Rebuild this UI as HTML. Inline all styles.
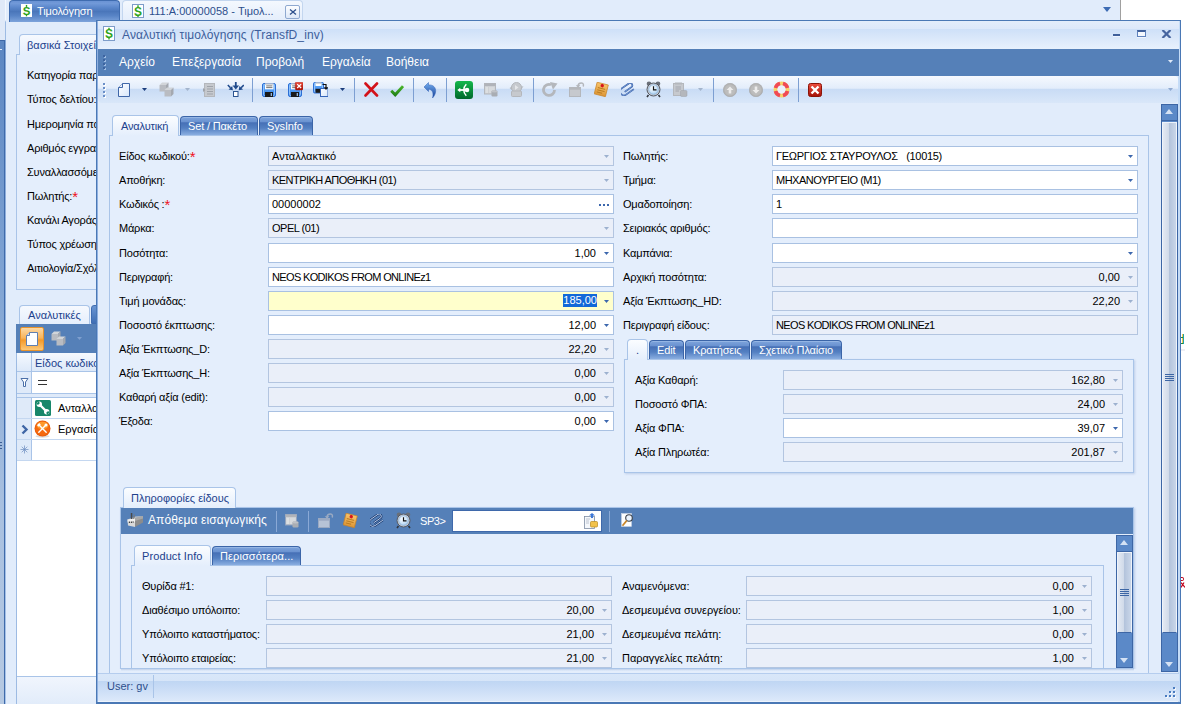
<!DOCTYPE html>
<html><head><meta charset="utf-8">
<style>
*{box-sizing:border-box;margin:0;padding:0}
html,body{width:1185px;height:704px;overflow:hidden;background:#dfeaf9;font-family:"Liberation Sans",sans-serif;font-size:11px;color:#000}
.a{position:absolute}
.t{position:absolute;white-space:nowrap;line-height:14px;height:14px}
.lb{position:absolute;white-space:nowrap;line-height:14px;height:14px;font-size:11px;color:#000;letter-spacing:-0.2px}
.in{position:absolute;height:20px;border:1px solid #a9c1e2;background:#fff;font-size:11px;line-height:18px;padding:0 3px;white-space:nowrap;overflow:hidden}
.in.d{background:#eaeff9;border-color:#b3c5e0}
.in.r{text-align:right;padding-right:17px}
.ar{position:absolute;width:5px;height:3px;background:#3c67ad;clip-path:polygon(0 0,100% 0,50% 100%)}
.ar.g{background:#9db1cf}
.red{color:#f01020;font-size:15px;line-height:10px;vertical-align:-2px;letter-spacing:0}
.u{letter-spacing:-0.55px}
</style></head><body>
<!-- BACKGROUND APP -->
<div id="bg" class="a" style="left:0;top:0;width:1185px;height:704px;overflow:hidden">

<!-- top tab strip -->
<div class="a" style="left:0;top:0;width:1121px;height:22px;background:#e1ecfb"></div>
<div class="a" style="left:1121px;top:0;width:64px;height:704px;background:#fff"></div>
<div class="a" style="left:1120px;top:0;width:1px;height:22px;background:#a0a0a0"></div>
<!-- left strip -->
<div class="a" style="left:0;top:0;width:5px;height:40px;background:#dfe9f8"></div>
<div class="a" style="left:0;top:40px;width:4px;height:664px;border-top:1px solid #3d66a5;background:linear-gradient(#5b86c2 0%,#7fa3d3 35%,#a8c0e0 70%,#b6c9e2 100%)"></div>
<div class="a" style="left:4px;top:40px;width:1px;height:664px;background:#3f6aaa"></div>
<div class="a" style="left:5px;top:0;width:1px;height:704px;background:linear-gradient(#f2f7fe 0,#f2f7fe 20px,#9dbbe3 22px,#9dbbe3 40px,#86a8d8 40px,#a9c4e8 100%)"></div><div class="a" style="left:0;top:49px;width:2px;height:1px;background:#dfe9f8"></div>
<!-- document area -->
<div class="a" style="left:6px;top:22px;width:1115px;height:682px;background:#e1ecfb"></div>
<!-- main tabs -->
<div class="a" style="left:9px;top:0;width:111px;height:22px;border-radius:4px 4px 0 0;background:linear-gradient(#6a93d4 0%,#7199d8 12%,#5c88cc 30%,#4a76ba 50%,#5884c6 70%,#7da3db 100%);border:1px solid #3f6cb0;border-bottom:none"></div>
<svg class="a" style="left:21px;top:4px" width="11" height="13" viewBox="0 0 11 13"><rect x="0" y="0" width="11" height="13" fill="#fff"/><text x="5.5" y="10.8" text-anchor="middle" font-family="Liberation Sans" font-weight="bold" font-size="11.5" fill="#2ea31c">S</text><rect x="4.8" y="0.92" width="1.400" height="2" fill="#2ea31c"/><rect x="4.8" y="10.50" width="1.400" height="1.800" fill="#2ea31c"/></svg>
<div class="t" style="left:37px;top:4px;font-size:11px;letter-spacing:-0.15px;color:#fff">Τιμολόγηση</div>
<div class="a" style="left:122px;top:0;width:181px;height:22px;border-radius:4px 4px 0 0;background:linear-gradient(#f4f8fe,#e3edfb);border:1px solid #c3d6ef;border-bottom:none"></div>
<svg class="a" style="left:132px;top:4px" width="12" height="14" viewBox="0 0 12 14"><rect x="0.5" y="0.5" width="11" height="13" fill="#fff" stroke="#7d9cc9"/><text x="6.0" y="11.5" text-anchor="middle" font-family="Liberation Sans" font-weight="bold" font-size="12.0" fill="#2ea31c">S</text><rect x="5.3" y="1.26" width="1.400" height="2" fill="#2ea31c"/><rect x="5.3" y="11.20" width="1.400" height="1.800" fill="#2ea31c"/></svg>
<div class="t" style="left:149px;top:4px;font-size:11px;color:#2d4f8c">111:A:00000058 - Τιμολ...</div>
<div class="a" style="left:285px;top:5px;width:15px;height:14px;border:1px solid #8fa9d0;border-radius:2px;background:linear-gradient(#fdfeff,#dde8f8)"></div>
<svg class="a" style="left:289px;top:8px" width="8" height="8" viewBox="0 0 8 8"><path d="M1 1.500L7 6.500M7 1.500L1 6.500" stroke="#2d4f8c" stroke-width="1.300"/></svg>
<div class="ar" style="left:1103px;top:7px;background:#3d6cb4;width:8px;height:5px"></div>
<!-- panel 1 -->
<div class="a" style="left:16px;top:54px;width:200px;height:236px;border:1px solid #a9c4e8;background:#e4eefc"></div>
<div class="a" style="left:19px;top:34px;width:100px;height:21px;border:1px solid #a9c4e8;border-bottom:none;border-radius:4px 4px 0 0;background:linear-gradient(#f6f9fe,#e4eefc)"></div>
<div class="t" style="left:27px;top:38px;font-size:11px;color:#21418c">βασικά Στοιχεία</div>
<div class="lb" style="left:27px;top:68px">Κατηγορία παραστατικού:</div>
<div class="lb" style="left:27px;top:92px">Τύπος δελτίου:</div>
<div class="lb" style="left:27px;top:117px">Ημερομηνία παραστατικού:</div>
<div class="lb" style="left:27px;top:141px">Αριθμός εγγραφής:</div>
<div class="lb" style="left:27px;top:165px">Συναλλασσόμενος:</div>
<div class="lb" style="left:27px;top:189px">Πωλητής:<span class="red">*</span></div>
<div class="lb" style="left:27px;top:213px">Κανάλι Αγοράς:</div>
<div class="lb" style="left:27px;top:237px">Τύπος χρέωσης:</div>
<div class="lb" style="left:27px;top:261px">Αιτιολογία/Σχόλια:</div>
<!-- panel 2 : grid -->
<div class="a" style="left:16px;top:324px;width:200px;height:380px;border-left:1px solid #9dbbe3;background:#fff"></div>
<div class="a" style="left:19px;top:305px;width:71px;height:20px;border:1px solid #a9c4e8;border-bottom:none;border-radius:4px 4px 0 0;background:linear-gradient(#f6f9fe,#e4eefc)"></div>
<div class="t" style="left:28px;top:308px;font-size:11px;color:#21418c">Αναλυτικές</div>
<div class="a" style="left:91px;top:305px;width:30px;height:19px;border-radius:3px 3px 0 0;background:linear-gradient(#6a95d2,#3f6fb5);border:1px solid #3f6cb0"></div>
<div class="a" style="left:16px;top:324px;width:200px;height:29px;background:#5580b8"></div>
<div class="a" style="left:20px;top:327px;width:24px;height:24px;border:1px solid #e8932c;border-radius:2px;background:linear-gradient(#fbd9a6 0%,#f9b45a 45%,#f49a2a 55%,#fbc878 100%)"></div>
<svg class="a" style="left:25px;top:331px" width="14" height="16" viewBox="0 0 14 16"><path d="M4.5 1.5H12.5V14.5H1.5V4.5Z" fill="#fdfeff" stroke="#5f7fb0"/><path d="M4.5 1.5V4.5H1.5" fill="#dbe6f5" stroke="#5f7fb0"/></svg>
<svg class="a" style="left:51px;top:331px" width="15" height="15" viewBox="0 0 15 15"><path d="M0.5 3.0H7.0V9.5H0.5Z" fill="#b9bcc2"/><path d="M0.5 3.0L3.0 0.5H9.5L7.0 3.0Z" fill="#d2d5d9"/><path d="M7.0 3.0L9.5 0.5V7.0L7.0 9.5Z" fill="#a4a8af"/><path d="M5.5 8.0H12.0V14.5H5.5Z" fill="#b9bcc2"/><path d="M5.5 8.0L8.0 5.5H14.5L12.0 8.0Z" fill="#d2d5d9"/><path d="M12.0 8.0L14.5 5.5V12.0L12.0 14.5Z" fill="#a4a8af"/></svg>
<div class="ar" style="left:77px;top:337px;background:#7f9fcf"></div>
<!-- header -->
<div class="a" style="left:17px;top:353px;width:200px;height:19px;background:linear-gradient(#f5f9fe,#dde9f9);border-bottom:1px solid #a9c4e8"></div>
<div class="a" style="left:31px;top:353px;width:1px;height:107px;background:#a9c4e8"></div>
<div class="t" style="left:35px;top:356px;font-size:11px;color:#21418c">Είδος κωδικού</div>
<!-- filter row -->
<div class="a" style="left:17px;top:372px;width:14px;height:21px;background:#dfeaf9"></div>
<div class="a" style="left:17px;top:393px;width:200px;height:1px;background:#a9c4e8"></div>
<div class="a" style="left:17px;top:394px;width:200px;height:3px;background:#dfeaf9"></div>
<div class="a" style="left:17px;top:397px;width:200px;height:1px;background:#a9c4e8"></div>
<svg class="a" style="left:20px;top:377px" width="9" height="11" viewBox="0 0 9 11"><path d="M1 1.5H8L5.5 5V9.5H3.5V5Z" fill="#fff" stroke="#4a6fa8" stroke-width="1"/></svg>
<div class="a" style="left:38px;top:380px;width:9px;height:1px;background:#333"></div><div class="a" style="left:38px;top:384px;width:9px;height:1px;background:#333"></div>
<!-- rows -->
<div class="a" style="left:17px;top:398px;width:14px;height:62px;background:#dfeaf9"></div>
<div class="a" style="left:17px;top:418px;width:200px;height:1px;background:#c4d7f0"></div>
<div class="a" style="left:17px;top:439px;width:200px;height:1px;background:#c4d7f0"></div>
<div class="a" style="left:17px;top:460px;width:200px;height:1px;background:#c4d7f0"></div>
<svg class="a" style="left:35px;top:400px" width="16" height="16" viewBox="0 0 16 16"><rect width="16" height="16" rx="1.5" fill="#17876a"/><path d="M4.500 4.500L11.500 11.500" stroke="#fff" stroke-width="2.400"/><circle cx="4.300" cy="4.300" r="2.700" fill="#fff"/><circle cx="11.700" cy="11.700" r="2.700" fill="#fff"/><path d="M1 4.300L3.800 1L4.800 3.200L3.200 4.800Z" fill="#17876a"/><path d="M15 11.700L12.200 15L11.200 12.800L12.800 11.200Z" fill="#17876a"/></svg>
<div class="t" style="left:58px;top:401px;font-size:11px">Ανταλλακτικό</div>
<svg class="a" style="left:34px;top:420px" width="17" height="18" viewBox="0 0 17 18"><ellipse cx="8.500" cy="16.300" rx="7" ry="1.500" fill="#dcdcdc"/><circle cx="8.500" cy="8.500" r="8" fill="#e85a0a"/><circle cx="8.500" cy="8.500" r="7.200" fill="#f56a10"/><ellipse cx="8.500" cy="5.500" rx="5.800" ry="3.800" fill="#ffa030" opacity=".85"/><path d="M4.800 4.800L12.200 12.200M12.200 4.800L4.800 12.200" stroke="#fff" stroke-width="1.400" stroke-linecap="round"/><path d="M3.800 6L6 3.800" stroke="#fff" stroke-width="2.200"/><circle cx="12" cy="5" r="1.500" fill="#fff"/></svg>
<div class="t" style="left:58px;top:422px;font-size:11px">Εργασία</div>
<svg class="a" style="left:21px;top:424px" width="8" height="11" viewBox="0 0 8 11"><path d="M1.500 1.500L5.500 5.500L1.500 9.500" stroke="#3f66a6" stroke-width="2.400" fill="none"/></svg>
<svg class="a" style="left:20px;top:445px" width="9" height="9" viewBox="0 0 9 9"><path d="M4.5 0.5V8.5M0.5 4.5H8.5M1.7 1.7L7.3 7.3M7.3 1.7L1.7 7.3" stroke="#6d8dc0" stroke-width="0.700"/></svg>
<!-- footer of grid -->
<div class="a" style="left:17px;top:676px;width:200px;height:28px;background:linear-gradient(#f0f5fd,#e2ecfa);border-top:1px solid #a9c4e8"></div>
<!-- splitter grip -->
<div class="a" style="left:0;top:442px;width:2px;height:1px;background:#3d5f96"></div>
<div class="a" style="left:0;top:445px;width:2px;height:1px;background:#3d5f96"></div>
<div class="a" style="left:0;top:448px;width:2px;height:1px;background:#3d5f96"></div>
<!-- right side bits -->
<div class="a" style="left:1182px;top:334px;width:1px;height:10px;background:#f2c84a"></div><div class="a" style="left:1183px;top:334px;width:1px;height:10px;background:#1fa0a8"></div><div class="a" style="left:1181px;top:337px;width:2px;height:1px;background:#1d8a3a"></div><div class="a" style="left:1181px;top:343px;width:2px;height:1px;background:#1d8a3a"></div><div class="a" style="left:1181px;top:349px;width:4px;height:2px;background:#eeeef4"></div>
<div class="a" style="left:1181px;top:577px;width:3px;height:4px;border:1px solid #c0001a;border-left:none;border-radius:0 2px 2px 0"></div><svg class="a" style="left:1181px;top:582px" width="4" height="6" viewBox="0 0 4 6"><path d="M0 0.500L4 5.500M0 5.500L3 0.500" stroke="#c0001a" stroke-width="1.200"/></svg>
</div>
<!-- WINDOW -->

<!-- window frame -->
<div class="a" style="left:96px;top:20px;width:1085px;height:684px;background:#e1ecfb;border:1px solid #4a78b5;border-bottom-width:2px;box-shadow:inset 1px 0 0 #8fb0e0,inset -1px 0 0 #c5dcf7,inset -2px 0 0 #c5dcf7,inset 0 -1px 0 #eef4fd"></div>
<!-- title bar -->
<div class="a" style="left:98px;top:21px;width:1081px;height:28px;background:linear-gradient(#e3edfb 0px,#dce8fa 8px,#cee0f8 8px,#d6e5f9 14px,#e8f1fd 28px)"></div>
<svg class="a" style="left:103px;top:26px" width="12" height="15" viewBox="0 0 12 15"><rect x="0.5" y="0.5" width="11" height="14" fill="#fff" stroke="#7d9cc9"/><text x="6.0" y="12.0" text-anchor="middle" font-family="Liberation Sans" font-weight="bold" font-size="12.0" fill="#2ea31c">S</text><rect x="5.3" y="1.76" width="1.400" height="2" fill="#2ea31c"/><rect x="5.3" y="11.70" width="1.400" height="1.800" fill="#2ea31c"/></svg>
<div class="t" style="left:122px;top:28px;font-size:12px;letter-spacing:0.12px;color:#3d5f9c">Αναλυτική τιμολόγησης (TransfD_inv)</div>
<div class="a" style="left:1113px;top:34px;width:7px;height:2px;background:#3f5f9a;box-shadow:0 1px 0 #eef4fd"></div>
<div class="a" style="left:1137px;top:30px;width:9px;height:7px;border:1px solid #5f82bd;border-top:2px solid #3f5f9a;background:#f4f8fe;box-shadow:0 1px 0 #eef4fd"></div>
<svg class="a" style="left:1161px;top:30px" width="11" height="8" viewBox="0 0 11 8"><path d="M1.500 0L9.500 8M9.500 0L1.500 8" stroke="#46659f" stroke-width="2.200"/></svg>
<!-- menu bar -->
<div class="a" style="left:98px;top:49px;width:1081px;height:27px;background:#5580b8"></div>
<div class="t" style="left:119px;top:55px;font-size:12px;color:#fff">Αρχείο</div>
<div class="t" style="left:172px;top:55px;font-size:12px;color:#fff">Επεξεργασία</div>
<div class="t" style="left:256px;top:55px;font-size:12px;color:#fff">Προβολή</div>
<div class="t" style="left:322px;top:55px;font-size:12px;color:#fff">Εργαλεία</div>
<div class="t" style="left:386px;top:55px;font-size:12px;color:#fff">Βοήθεια</div>
<div class="ar" style="left:1168px;top:60px;background:#dfe9f8"></div>
<!-- toolbar -->
<div class="a" style="left:98px;top:76px;width:1080px;height:27px;border-radius:0 4px 4px 4px;background:linear-gradient(#f6f9fe 0%,#e3edfb 45%,#c9dcf5 50%,#d9e7f9 100%)"></div>
<div class="ar g" style="left:1168px;top:88px;background:#8fa9d0"></div>
<div id="tb"><svg width="0" height="0" style="position:absolute"><defs>
<linearGradient id="gDoc" x1="0" y1="0" x2="1" y2="1"><stop offset="0" stop-color="#ffffff"/><stop offset="1" stop-color="#d6e6fb"/></linearGradient>
<linearGradient id="gFl" x1="0" y1="0" x2="0" y2="1"><stop offset="0" stop-color="#6ab2fb"/><stop offset="1" stop-color="#3a84ea"/></linearGradient>
<linearGradient id="gGr" x1="0" y1="0" x2="0" y2="1"><stop offset="0" stop-color="#14b84c"/><stop offset="1" stop-color="#00682b"/></linearGradient>
<linearGradient id="gRd" x1="0" y1="0" x2="0" y2="1"><stop offset="0" stop-color="#ee5040"/><stop offset="1" stop-color="#a41208"/></linearGradient>
<linearGradient id="gUn" x1="0" y1="0" x2="0" y2="1"><stop offset="0" stop-color="#74b0f2"/><stop offset="1" stop-color="#173f96"/></linearGradient>
<linearGradient id="gNt" x1="0" y1="0" x2="0" y2="1"><stop offset="0" stop-color="#f8c46c"/><stop offset="1" stop-color="#dd9636"/></linearGradient>
<linearGradient id="gCk" x1="0" y1="0" x2="0" y2="1"><stop offset="0" stop-color="#5cc43a"/><stop offset="1" stop-color="#1d7a12"/></linearGradient>
<radialGradient id="gFace" cx="0.4" cy="0.35" r="0.7"><stop offset="0" stop-color="#ffffff"/><stop offset="1" stop-color="#a9d0f2"/></radialGradient>
</defs></svg>
<div class="a" style="left:103px;top:83px;width:2px;height:2px;background:#6a8fc8;box-shadow:1px 1px 0 #fff"></div>
<div class="a" style="left:103px;top:87px;width:2px;height:2px;background:#6a8fc8;box-shadow:1px 1px 0 #fff"></div>
<div class="a" style="left:103px;top:91px;width:2px;height:2px;background:#6a8fc8;box-shadow:1px 1px 0 #fff"></div>
<div class="a" style="left:103px;top:95px;width:2px;height:2px;background:#6a8fc8;box-shadow:1px 1px 0 #fff"></div>
<svg class="a" style="left:118px;top:83px" width="12" height="14" viewBox="0 0 12 14"><path d="M4.5 0.5H11.5V13.5H0.5V4.5Z" fill="url(#gDoc)" stroke="#3f66a8"/><path d="M4.5 0.5V4.5H0.5" fill="#e8f0fc" stroke="#3f66a8"/></svg>
<div class="ar" style="left:142px;top:88px;background:#1c3d7c"></div>
<svg class="a" style="left:159px;top:82px" width="15" height="15" viewBox="0 0 15 15"><path d="M0.5 3.0H7.0V9.5H0.5Z" fill="#b9bcc2"/><path d="M0.5 3.0L3.0 0.5H9.5L7.0 3.0Z" fill="#d2d5d9"/><path d="M7.0 3.0L9.5 0.5V7.0L7.0 9.5Z" fill="#a4a8af"/><path d="M5.5 8.0H12.0V14.5H5.5Z" fill="#b9bcc2"/><path d="M5.5 8.0L8.0 5.5H14.5L12.0 8.0Z" fill="#d2d5d9"/><path d="M12.0 8.0L14.5 5.5V12.0L12.0 14.5Z" fill="#a4a8af"/></svg>
<div class="ar" style="left:185px;top:88px;background:#a3b4cc"></div>
<svg class="a" style="left:203px;top:83px" width="13" height="14" viewBox="0 0 13 14"><rect x="1.5" y="0.5" width="10" height="13" fill="#c6c9ce" stroke="#b4b7bc"/><path d="M4 3.5H10M4 6H10M4 8.5H10M4 11H10" stroke="#9fa3aa" stroke-width="1"/><path d="M0 5L2.5 7L0 9Z" fill="#9fa3aa"/></svg>
<svg class="a" style="left:227px;top:82px" width="17" height="15" viewBox="0 0 17 15"><rect x="6.500" y="9.500" width="4.500" height="5" fill="#fff" stroke="#2d5591"/><path d="M8.800 0V4" stroke="#1f4a8c" stroke-width="1.800"/><path d="M5.500 3.500H12.100L8.800 7.500Z" fill="#1f4a8c"/><path d="M0.800 3L3.500 5.700" stroke="#1f4a8c" stroke-width="1.600"/><path d="M5.900 8.300L1.600 7.500L5.200 3.900Z" fill="#1f4a8c"/><path d="M16.800 3L14.100 5.700" stroke="#1f4a8c" stroke-width="1.600"/><path d="M11.700 8.300L16 7.500L12.400 3.900Z" fill="#1f4a8c"/></svg>
<div class="a" style="left:252px;top:78px;width:1px;height:24px;background:#7d9fd2"></div>
<svg class="a" style="left:262px;top:83px" width="14" height="14" viewBox="0 0 14 14"><rect x="0.5" y="0.5" width="13" height="13" rx="1.500" fill="url(#gFl)" stroke="#2c6fd6"/><rect x="1.500" y="1.500" width="11" height="11" rx="1" fill="none" stroke="#8fc2fb" stroke-width="1"/><rect x="3" y="0.500" width="8.500" height="5.800" fill="#fdfeff"/><path d="M3 1H11.500" stroke="#a8aeb8" stroke-width="1"/><path d="M4.200 2.900H10.400M4.200 4.600H10.400" stroke="#666" stroke-width=".9"/><rect x="3" y="9" width="8" height="5" fill="#1a1a1a"/><rect x="8.700" y="10" width="1.200" height="3" fill="#9fc8f5"/></svg>
<svg class="a" style="left:288px;top:82px" width="15" height="15" viewBox="0 -1 15 15"><rect x="0.5" y="0.5" width="13" height="13" rx="1.500" fill="url(#gFl)" stroke="#2c6fd6"/><rect x="1.500" y="1.500" width="11" height="11" rx="1" fill="none" stroke="#8fc2fb" stroke-width="1"/><rect x="3" y="0.500" width="8.500" height="5.800" fill="#fdfeff"/><path d="M3 1H11.500" stroke="#a8aeb8" stroke-width="1"/><path d="M4.200 2.900H10.400M4.200 4.600H10.400" stroke="#666" stroke-width=".9"/><rect x="3" y="9" width="8" height="5" fill="#1a1a1a"/><rect x="8.700" y="10" width="1.200" height="3" fill="#9fc8f5"/><rect x="7.300" y="-0.800" width="7.700" height="7.700" rx="1" fill="url(#gRd)" stroke="#b01a0c" stroke-width=".5"/><path d="M9.200 1.100L13.100 5M13.100 1.100L9.200 5" stroke="#fff" stroke-width="1.300"/></svg>
<svg class="a" style="left:313px;top:82px" width="15" height="15" viewBox="0 0 15 15"><rect x="0.5" y="0.5" width="10" height="10.500" rx="1.200" fill="url(#gFl)" stroke="#2c6fd6"/><rect x="1.500" y="1.500" width="8" height="8.500" rx=".8" fill="none" stroke="#8fc2fb" stroke-width="1"/><rect x="2.500" y="0.500" width="6" height="3.500" fill="#fdfeff"/><path d="M2.500 1H8.500" stroke="#a8aeb8"/><rect x="2.500" y="6.800" width="5.500" height="4" fill="#1a1a1a"/><rect x="7.500" y="6.500" width="7.500" height="8" fill="url(#gDoc)" stroke="#3565b8"/><path d="M9.500 2.500H13V6" stroke="#111" stroke-width="1.200" fill="none"/><path d="M10.800 5.200H15.200L13 8Z" fill="#111"/></svg>
<div class="ar" style="left:340px;top:88px;background:#1c3d7c"></div>
<div class="a" style="left:354px;top:78px;width:1px;height:24px;background:#7d9fd2"></div>
<svg class="a" style="left:364px;top:82px" width="15" height="15" viewBox="0 0 15 15"><path d="M1.500 1.500L13 13.500M13 1.500L1.500 13.500" stroke="#d3121a" stroke-width="2.6" stroke-linecap="round"/></svg>
<svg class="a" style="left:390px;top:84px" width="14" height="13" viewBox="0 0 14 13"><path d="M1.300 6.800L5.200 10.800L13 2.200" stroke="url(#gCk)" stroke-width="3" fill="none" stroke-linejoin="miter"/><path d="M1.300 6.800L5.200 10.800L13 2.200" stroke="#2f9a1e" stroke-width="1.500" fill="none" opacity=".5"/></svg>
<div class="a" style="left:413px;top:78px;width:1px;height:24px;background:#7d9fd2"></div>
<svg class="a" style="left:423px;top:82px" width="14" height="16" viewBox="0 0 14 16"><path d="M1 5L5.500 0.500V3C10 2.500 13.500 5.500 12.500 10.500C12 13 10.500 15 9.500 16C10.500 12.500 10.500 8 5.500 7V9.500Z" fill="url(#gUn)" stroke="#2a5db5" stroke-width=".5"/></svg>
<div class="a" style="left:446px;top:78px;width:1px;height:24px;background:#7d9fd2"></div>
<svg class="a" style="left:455px;top:81px" width="18" height="18" viewBox="0 0 18 18"><rect x="0" y="0" width="18" height="18" rx="3" fill="url(#gGr)"/><path d="M2.300 9L5.300 6.800V11.200Z" fill="#fff"/><rect x="4.800" y="8.100" width="8" height="1.800" fill="#fff"/><path d="M11.300 3.200A8 8 0 0 0 11.300 14.800" stroke="#fff" stroke-width="1.500" fill="none"/><circle cx="12" cy="9" r="2.300" fill="#fff"/></svg>
<svg class="a" style="left:484px;top:83px" width="14" height="14" viewBox="0 0 14 14"><rect x="0.5" y="0.5" width="11" height="10.500" fill="#cdd0d4" stroke="#b4b7bc"/><rect x="0.5" y="0.5" width="11" height="2.500" fill="#b0b3b9"/><path d="M1.500 5H4M1.500 7H4M1.500 9H4" stroke="#eceded" stroke-width="1.200"/><path d="M5 5H10.500M5 7H10.500M5 9H7" stroke="#e2e3e6" stroke-width="1.200"/><rect x="7.500" y="7.500" width="6" height="6" rx="1.200" fill="#a9adb3"/><ellipse cx="10.500" cy="8.500" rx="3" ry="1" fill="#bfc2c7"/></svg>
<svg class="a" style="left:509px;top:82px" width="15" height="15" viewBox="0 0 15 15"><circle cx="7.500" cy="5.500" r="5" fill="#c6c9ce" stroke="#b4b7bc"/><path d="M6 3L9.500 5.500L6 8Z" fill="#e4e6e9"/><rect x="2.500" y="9" width="10" height="5.500" rx="1" fill="#c6c9ce" stroke="#b4b7bc"/><path d="M0.500 6L3 4.500V8ZM14.500 4L12 5V8Z" fill="#b4b7bc"/></svg>
<div class="a" style="left:533px;top:78px;width:1px;height:24px;background:#7d9fd2"></div>
<svg class="a" style="left:542px;top:82px" width="16" height="15" viewBox="0 0 16 15"><path d="M12.500 8A5.500 5.500 0 1 1 9 2.800" stroke="#b4b7bc" stroke-width="2.800" fill="none"/><path d="M8 0L15.500 1.500L11 7.500Z" fill="#b4b7bc"/></svg>
<svg class="a" style="left:569px;top:82px" width="16" height="15" viewBox="0 0 16 15"><rect x="0.5" y="5.500" width="11" height="9" fill="#c6c9ce" stroke="#b4b7bc"/><rect x="0.5" y="5.500" width="11" height="2.200" fill="#b4b7bc"/><path d="M9 4.500C9 2 11 1 12.500 1C14.500 1 15 3 14 4.500" stroke="#b4b7bc" stroke-width="1.400" fill="none"/><path d="M6.800 3.200L9.300 6L11.200 3Z" fill="#b4b7bc"/></svg>
<svg class="a" style="left:594px;top:82px" width="15" height="15" viewBox="0 0 15 15"><g transform="rotate(14 7.500 7.500)"><rect x="1.500" y="1.500" width="11.500" height="12" fill="url(#gNt)" stroke="#c98428" stroke-width=".7"/><path d="M3.500 6.500H11M3.500 8.800H11M3.500 11H9" stroke="#b87a20" stroke-width=".9"/><circle cx="7.300" cy="3.600" r="1.700" fill="#d8141c"/></g></svg>
<svg class="a" style="left:621px;top:83px" width="15" height="13" viewBox="0 0 15 13"><g transform="rotate(-35 7 6.500)"><path d="M3 6.500H11.500A2.300 2.300 0 0 0 11.500 2H2.500A3.800 3.800 0 0 0 2.500 9.600H12" fill="none" stroke="#2b55a2" stroke-width="1.600"/><path d="M3 6.500H11.500A2.300 2.300 0 0 0 11.500 2H2.500A3.800 3.800 0 0 0 2.500 9.600H12" fill="none" stroke="#a9c6f0" stroke-width=".5"/></g></svg>
<svg class="a" style="left:646px;top:81px" width="15" height="17" viewBox="0 0 15 17"><circle cx="3" cy="2.800" r="2.300" fill="#6a6f78"/><circle cx="12" cy="2.800" r="2.300" fill="#6a6f78"/><path d="M2.500 14L1 16M12.500 14L14 16" stroke="#33363c" stroke-width="1.600"/><circle cx="7.500" cy="8.500" r="6.500" fill="#c9ced6" stroke="#555a63" stroke-width="1"/><circle cx="7.500" cy="8.500" r="4.800" fill="url(#gFace)" stroke="#7ba4d0" stroke-width=".6"/><path d="M7.500 5.200V8.800H10.500" stroke="#111" stroke-width="1.200" fill="none"/></svg>
<svg class="a" style="left:673px;top:82px" width="15" height="15" viewBox="0 0 15 15"><rect x="0.5" y="1.500" width="10" height="12" fill="#c6c9ce" stroke="#b4b7bc"/><rect x="2" y="0.500" width="7" height="2" fill="#b4b7bc"/><path d="M2.500 5H8M2.500 7H8M2.500 9H6" stroke="#9fa3aa" stroke-width=".9"/><rect x="7.500" y="8.500" width="6.500" height="6" rx="1.200" fill="#b4b7bc" stroke="#9fa3aa" stroke-width=".5"/></svg>
<div class="ar" style="left:698px;top:88px;background:#a3b4cc"></div>
<div class="a" style="left:713px;top:78px;width:1px;height:24px;background:#7d9fd2"></div>
<svg class="a" style="left:723px;top:83px" width="14" height="14" viewBox="0 0 14 14"><circle cx="7" cy="7" r="6.700" fill="#b5b5b5" stroke="#a2a2a2" stroke-width=".6"/><circle cx="7" cy="7" r="5.200" fill="#bdbdbd"/><path d="M7 3.500L10.500 7H8.300V10.500H5.700V7H3.500Z" fill="#ececec"/></svg>
<svg class="a" style="left:749px;top:83px" width="14" height="14" viewBox="0 0 14 14"><circle cx="7" cy="7" r="6.700" fill="#b5b5b5" stroke="#a2a2a2" stroke-width=".6"/><circle cx="7" cy="7" r="5.200" fill="#bdbdbd"/><path d="M7 10.500L10.500 7H8.300V3.500H5.700V7H3.500Z" fill="#ececec"/></svg>
<svg class="a" style="left:773px;top:81px" width="17" height="17" viewBox="0 0 17 17"><circle cx="8.500" cy="8.500" r="8" fill="#f9d468"/><path d="M16.26 10.44A8 8 0 0 1 10.44 16.26L9.47 12.38A4 4 0 0 0 12.38 9.47Z" fill="#f04a56"/><path d="M6.56 16.26A8 8 0 0 1 0.74 10.44L4.62 9.47A4 4 0 0 0 7.53 12.38Z" fill="#f04a56"/><path d="M0.74 6.56A8 8 0 0 1 6.56 0.74L7.53 4.62A4 4 0 0 0 4.62 7.53Z" fill="#f04a56"/><path d="M10.44 0.74A8 8 0 0 1 16.26 6.56L12.38 7.53A4 4 0 0 0 9.47 4.62Z" fill="#f04a56"/><circle cx="8.500" cy="8.500" r="4.200" fill="#e9f1fc"/></svg>
<div class="a" style="left:798px;top:78px;width:1px;height:24px;background:#7d9fd2"></div>
<svg class="a" style="left:808px;top:83px" width="14" height="14" viewBox="0 0 14 14"><rect x="0.5" y="0.5" width="13" height="13" rx="2" fill="url(#gRd)" stroke="#8c1408"/><path d="M3.500 3.500L10.500 10.500M10.500 3.500L3.500 10.500" stroke="#fff" stroke-width="2.400"/></svg></div><!--/tb-->
<!-- outer scrollbar -->
<div id="sb1"><div class="a" style="left:1161px;top:104px;width:17px;height:568px;background:#5b89c8;border:1px solid #3d66a5"></div><div class="a" style="left:1165px;top:109px;width:0;height:0;border-left:4.5px solid transparent;border-right:4.5px solid transparent;border-bottom:5px solid #d5e2f4"></div><div class="a" style="left:1165px;top:662px;width:0;height:0;border-left:4.5px solid transparent;border-right:4.5px solid transparent;border-top:5px solid #d5e2f4"></div><div class="a" style="left:1161px;top:120px;width:17px;height:1px;background:#3d66a5"></div><div class="a" style="left:1162px;top:122px;width:15px;height:511px;border:1px solid #eef3fa;border-bottom:1px solid #3d66a5;background:linear-gradient(90deg,#e3e9f3 0%,#d0dae9 45%,#b4c4dc 50%,#c9d6e9 100%)"></div><div class="a" style="left:1165px;top:374px;width:9px;height:1px;background:#3d66a5"></div><div class="a" style="left:1165px;top:376px;width:9px;height:1px;background:#3d66a5"></div><div class="a" style="left:1165px;top:378px;width:9px;height:1px;background:#3d66a5"></div><div class="a" style="left:1165px;top:380px;width:9px;height:1px;background:#3d66a5"></div></div>
<!-- tabs -->
<!-- main panel -->
<div class="a" style="left:109px;top:135px;width:1040px;height:539px;border:1px solid #a9c4e8;background:#e4eefc"></div>
<div id="tabs1"><div class="a" style="left:112px;top:115px;width:67px;height:21px;border:1px solid #a9c4e8;border-bottom:none;border-radius:4px 4px 0 0;background:linear-gradient(#fbfdff,#e4eefc)"></div><div class="t" style="left:121px;top:119px;color:#21418c;letter-spacing:-0.15px">Αναλυτική</div><div class="a" style="left:180px;top:116px;width:78px;height:19px;border:1px solid #3b65a8;border-bottom:none;border-radius:4px 4px 0 0;background:linear-gradient(#7ea4dc 0%,#6a92d0 27%,#4670b6 32%,#5480c2 62%,#8aaee1 100%);box-shadow:inset 0 1px 0 #94b5e4"></div><div class="t" style="left:188px;top:119px;color:#fff;letter-spacing:-0.15px">Set / Πακέτο</div><div class="a" style="left:259px;top:116px;width:54px;height:19px;border:1px solid #3b65a8;border-bottom:none;border-radius:4px 4px 0 0;background:linear-gradient(#7ea4dc 0%,#6a92d0 27%,#4670b6 32%,#5480c2 62%,#8aaee1 100%);box-shadow:inset 0 1px 0 #94b5e4"></div><div class="t" style="left:267px;top:119px;color:#fff;letter-spacing:-0.15px">SysInfo</div></div>
<div id="form">
<div class="lb" style="left:119px;top:149px">Είδος κωδικού:<span class=red>*</span></div><div class="in d" style="left:268px;top:146px;width:346px">Ανταλλακτικό</div><div class="ar g" style="left:604px;top:155px"></div>
<div class="lb" style="left:119px;top:173px">Αποθήκη:</div><div class="in d" style="left:268px;top:170px;width:346px"><span class="u">ΚΕΝΤΡΙΚΗ ΑΠΟΘΗΚΗ (01)</span></div><div class="ar g" style="left:604px;top:179px"></div>
<div class="lb" style="left:119px;top:197px">Κωδικός :<span class=red>*</span></div><div class="in" style="left:268px;top:194px;width:346px">00000002</div><div class="a" style="left:599px;top:204px;width:2px;height:2px;background:#3c67ad;box-shadow:4px 0 #3c67ad,8px 0 #3c67ad"></div>
<div class="lb" style="left:119px;top:221px">Μάρκα:</div><div class="in d" style="left:268px;top:218px;width:346px"><span class="u" style="letter-spacing:-0.5px">OPEL (01)</span></div><div class="ar g" style="left:604px;top:227px"></div>
<div class="lb" style="left:119px;top:246px">Ποσότητα:</div><div class="in r" style="left:268px;top:243px;width:346px">1,00</div><div class="ar" style="left:604px;top:252px"></div>
<div class="lb" style="left:119px;top:270px">Περιγραφή:</div><div class="in" style="left:268px;top:267px;width:346px"><span class="u" style="letter-spacing:-0.65px">NEOS KODIKOS FROM ONLINEz1</span></div>
<div class="lb" style="left:119px;top:294px">Τιμή μονάδας:</div><div class="in r" style="left:268px;top:291px;width:346px;background:#ffffcc"><span style="background:#1268d8;color:#fff;display:inline-block;height:13px;line-height:13px;margin-top:2px;padding:0;margin-right:-1px;vertical-align:top">185,00</span></div><div class="ar" style="left:604px;top:300px"></div>
<div class="lb" style="left:119px;top:318px">Ποσοστό έκπτωσης:</div><div class="in r" style="left:268px;top:315px;width:346px">12,00</div><div class="ar" style="left:604px;top:324px"></div>
<div class="lb" style="left:119px;top:342px">Αξία Έκπτωσης_D:</div><div class="in d r" style="left:268px;top:339px;width:346px">22,20</div><div class="ar g" style="left:604px;top:348px"></div>
<div class="lb" style="left:119px;top:366px">Αξία Έκπτωσης_H:</div><div class="in d r" style="left:268px;top:363px;width:346px">0,00</div><div class="ar g" style="left:604px;top:372px"></div>
<div class="lb" style="left:119px;top:390px">Καθαρή αξία (edit):</div><div class="in d r" style="left:268px;top:387px;width:346px">0,00</div><div class="ar g" style="left:604px;top:396px"></div>
<div class="lb" style="left:119px;top:414px">Έξοδα:</div><div class="in r" style="left:268px;top:411px;width:346px">0,00</div><div class="ar" style="left:604px;top:420px"></div>
<div class="lb" style="left:623px;top:149px">Πωλητής:</div><div class="in" style="left:772px;top:146px;width:366px"><span class="u" style="letter-spacing:-0.3px">ΓΕΩΡΓΙΟΣ ΣΤΑΥΡΟΥΛΟΣ&nbsp;&nbsp; (10015)</span></div><div class="ar" style="left:1128px;top:155px"></div>
<div class="lb" style="left:623px;top:173px">Τμήμα:</div><div class="in" style="left:772px;top:170px;width:366px"><span class="u" style="letter-spacing:-0.5px">ΜΗΧΑΝΟΥΡΓΕΙΟ (M1)</span></div><div class="ar" style="left:1128px;top:179px"></div>
<div class="lb" style="left:623px;top:197px">Ομαδοποίηση:</div><div class="in" style="left:772px;top:194px;width:366px">1</div>
<div class="lb" style="left:623px;top:221px">Σειριακός αριθμός:</div><div class="in" style="left:772px;top:218px;width:366px"></div>
<div class="lb" style="left:623px;top:246px">Καμπάνια:</div><div class="in" style="left:772px;top:243px;width:366px"></div><div class="ar" style="left:1128px;top:252px"></div>
<div class="lb" style="left:623px;top:270px">Αρχική ποσότητα:</div><div class="in d r" style="left:772px;top:267px;width:366px">0,00</div><div class="ar g" style="left:1128px;top:276px"></div>
<div class="lb" style="left:623px;top:294px">Αξία Έκπτωσης_HD:</div><div class="in d r" style="left:772px;top:291px;width:366px">22,20</div><div class="ar g" style="left:1128px;top:300px"></div>
<div class="lb" style="left:623px;top:318px">Περιγραφή είδους:</div><div class="in d" style="left:772px;top:315px;width:366px"><span class="u" style="letter-spacing:-0.65px">NEOS KODIKOS FROM ONLINEz1</span></div>
<div class="a" style="left:624px;top:359px;width:510px;height:114px;border:1px solid #a9c4e8;background:#e4eefc;box-shadow:1px 1px 2px rgba(120,150,200,.35)"></div>
<div class="a" style="left:627px;top:339px;width:21px;height:21px;border:1px solid #a9c4e8;border-bottom:none;border-radius:4px 4px 0 0;background:linear-gradient(#fbfdff,#e4eefc)"></div><div class="t" style="left:636px;top:343px;color:#21418c;letter-spacing:-0.15px">.</div><div class="a" style="left:649px;top:340px;width:35px;height:19px;border:1px solid #3b65a8;border-bottom:none;border-radius:4px 4px 0 0;background:linear-gradient(#7ea4dc 0%,#6a92d0 27%,#4670b6 32%,#5480c2 62%,#8aaee1 100%);box-shadow:inset 0 1px 0 #94b5e4"></div><div class="t" style="left:657px;top:343px;color:#fff;letter-spacing:-0.15px">Edit</div><div class="a" style="left:685px;top:340px;width:65px;height:19px;border:1px solid #3b65a8;border-bottom:none;border-radius:4px 4px 0 0;background:linear-gradient(#7ea4dc 0%,#6a92d0 27%,#4670b6 32%,#5480c2 62%,#8aaee1 100%);box-shadow:inset 0 1px 0 #94b5e4"></div><div class="t" style="left:693px;top:343px;color:#fff;letter-spacing:-0.15px">Κρατήσεις</div><div class="a" style="left:751px;top:340px;width:91px;height:19px;border:1px solid #3b65a8;border-bottom:none;border-radius:4px 4px 0 0;background:linear-gradient(#7ea4dc 0%,#6a92d0 27%,#4670b6 32%,#5480c2 62%,#8aaee1 100%);box-shadow:inset 0 1px 0 #94b5e4"></div><div class="t" style="left:759px;top:343px;color:#fff;letter-spacing:-0.15px">Σχετικό Πλαίσιο</div>
<div class="lb" style="left:635px;top:373px">Αξία Καθαρή:</div><div class="in d r" style="left:783px;top:370px;width:340px">162,80</div><div class="ar g" style="left:1113px;top:379px"></div>
<div class="lb" style="left:635px;top:397px">Ποσοστό ΦΠΑ:</div><div class="in d r" style="left:783px;top:394px;width:340px">24,00</div><div class="ar g" style="left:1113px;top:403px"></div>
<div class="lb" style="left:635px;top:421px">Αξία ΦΠΑ:</div><div class="in r" style="left:783px;top:418px;width:340px">39,07</div><div class="ar" style="left:1113px;top:427px"></div>
<div class="lb" style="left:635px;top:445px">Αξία Πληρωτέα:</div><div class="in d r" style="left:783px;top:442px;width:340px">201,87</div><div class="ar g" style="left:1113px;top:451px"></div>
<div class="a" style="left:120px;top:507px;width:1014px;height:162px;border:1px solid #a9c4e8;background:#e4eefc;box-shadow:1px 1px 2px rgba(120,150,200,.35)"></div>
<div class="a" style="left:123px;top:487px;width:113px;height:21px;border:1px solid #a9c4e8;border-bottom:none;border-radius:4px 4px 0 0;background:linear-gradient(#fbfdff,#e4eefc)"></div><div class="t" style="left:131px;top:491px;color:#21418c;letter-spacing:0">Πληροφορίες είδους</div>
<div class="a" style="left:121px;top:508px;width:1012px;height:26px;background:#5580b8"></div>
<div class="t" style="left:148px;top:513px;font-size:12px;letter-spacing:0.1px;color:#fff">Απόθεμα εισαγωγικής</div>
<div class="a" style="left:276px;top:511px;width:1px;height:21px;background:#8aa9d6"></div><div class="a" style="left:308px;top:511px;width:1px;height:21px;background:#8aa9d6"></div><div class="a" style="left:609px;top:511px;width:1px;height:21px;background:#8aa9d6"></div>
<div class="t" style="left:420px;top:514px;color:#fff;letter-spacing:-0.4px">SP3&gt;</div>
<div class="a" style="left:452px;top:510px;width:150px;height:22px;border:1px solid #3f69ab;background:#fff"></div>
<div id="tb2"><svg class="a" style="left:127px;top:513px" width="16" height="15" viewBox="0 0 16 15"><path d="M0.500 6.500L8 5V14L1 12.500Z" fill="#d9d9d9"/><path d="M0.500 6.500L8 5V9L0.700 9.500Z" fill="#efefef"/><path d="M8 5L16 3V9.500L8 14Z" fill="#8c8c8c"/><path d="M8 5L16 3V5.500L8 8Z" fill="#a8a8a8"/><path d="M0.500 6.500L8.500 3.500L16 3L8 5Z" fill="#c4c4c4"/><rect x="3.800" y="0" width="1.500" height="6" fill="#4a4a4a"/><path d="M6 6L6.800 1.500H7.800L7.500 5.500Z" fill="#7a7a7a"/><rect x="1.800" y="8.500" width="1.200" height="1.500" fill="#444"/><rect x="3.800" y="8.500" width="1.200" height="1.500" fill="#444"/><rect x="5.600" y="8.300" width="1" height="1.500" fill="#444"/></svg>
<svg class="a" style="left:285px;top:514px" width="14" height="14" viewBox="0 0 14 14"><rect x="0.5" y="0.5" width="11" height="10.500" fill="#cdd0d4" stroke="#93a3bd"/><rect x="0.5" y="0.5" width="11" height="2.500" fill="#b0b3b9"/><path d="M1.500 5H4M1.500 7H4M1.500 9H4" stroke="#eceded" stroke-width="1.200"/><path d="M5 5H10.500M5 7H10.500M5 9H7" stroke="#e2e3e6" stroke-width="1.200"/><rect x="7.500" y="7.500" width="6" height="6" rx="1.200" fill="#a9adb3"/><ellipse cx="10.500" cy="8.500" rx="3" ry="1" fill="#bfc2c7"/></svg>
<svg class="a" style="left:318px;top:513px" width="16" height="15" viewBox="0 0 16 15"><rect x="0.5" y="5.500" width="11" height="9" fill="#b7c3d6" stroke="#9aa9c2"/><rect x="0.5" y="5.500" width="11" height="2.200" fill="#9aa9c2"/><path d="M9 4.500C9 2 11 1 12.500 1C14.500 1 15 3 14 4.500" stroke="#9aa9c2" stroke-width="1.400" fill="none"/><path d="M6.800 3.200L9.300 6L11.200 3Z" fill="#9aa9c2"/></svg>
<svg class="a" style="left:343px;top:513px" width="15" height="15" viewBox="0 0 15 15"><g transform="rotate(14 7.500 7.500)"><rect x="1.500" y="1.500" width="11.500" height="12" fill="url(#gNt)" stroke="#c98428" stroke-width=".7"/><path d="M3.500 6.500H11M3.500 8.800H11M3.500 11H9" stroke="#b87a20" stroke-width=".9"/><circle cx="7.300" cy="3.600" r="1.700" fill="#d8141c"/></g></svg>
<svg class="a" style="left:370px;top:514px" width="15" height="13" viewBox="0 0 15 13"><g transform="rotate(-35 7 6.500)"><path d="M3 6.500H11.500A2.300 2.300 0 0 0 11.500 2H2.500A3.800 3.800 0 0 0 2.500 9.600H12" fill="none" stroke="#1d3a6e" stroke-width="2.200"/><path d="M3 6.500H11.500A2.300 2.300 0 0 0 11.500 2H2.500A3.800 3.800 0 0 0 2.500 9.600H12" fill="none" stroke="#b9cfee" stroke-width=".9"/></g></svg>
<svg class="a" style="left:396px;top:512px" width="15" height="17" viewBox="0 0 15 17"><circle cx="3" cy="2.800" r="2.300" fill="#6a6f78"/><circle cx="12" cy="2.800" r="2.300" fill="#6a6f78"/><path d="M2.500 14L1 16M12.500 14L14 16" stroke="#33363c" stroke-width="1.600"/><circle cx="7.500" cy="8.500" r="6.500" fill="#c9ced6" stroke="#555a63" stroke-width="1"/><circle cx="7.500" cy="8.500" r="4.800" fill="url(#gFace)" stroke="#7ba4d0" stroke-width=".6"/><path d="M7.500 5.200V8.800H10.500" stroke="#111" stroke-width="1.200" fill="none"/></svg>
<svg class="a" style="left:583px;top:513px" width="16" height="16" viewBox="0 0 16 16"><rect x="1.500" y="3.500" width="10" height="12" fill="#f4f7fb" stroke="#7f8da3" stroke-width=".8"/><path d="M6 2.500L9 0L12 2.500H10V5H8V2.500Z" fill="#3d78d8"/><rect x="7.500" y="8.500" width="7" height="5.500" rx="1" fill="#f2c24a" stroke="#b88a1c" stroke-width=".7"/><path d="M3 6H7M3 8H6M3 10H6" stroke="#b0b8c6" stroke-width=".8"/></svg>
<svg class="a" style="left:621px;top:513px" width="13" height="14" viewBox="0 0 13 14"><rect x="0.5" y="0.5" width="10" height="13" fill="#fdfefe" stroke="#c9d4e6" stroke-width=".6"/><circle cx="8" cy="5" r="3.300" fill="#eaf3fd" stroke="#3a3f48" stroke-width="1.100"/><path d="M5.800 7.500L1.500 12.800" stroke="#c8862a" stroke-width="1.800"/></svg></div><!--/tb2-->
<div class="a" style="left:131px;top:565px;width:973px;height:103px;border:1px solid #a9c4e8;border-bottom:none;background:#e4eefc"></div>
<div class="a" style="left:134px;top:545px;width:77px;height:21px;border:1px solid #a9c4e8;border-bottom:none;border-radius:4px 4px 0 0;background:linear-gradient(#fbfdff,#e4eefc)"></div><div class="t" style="left:142px;top:549px;color:#21418c;letter-spacing:0.1px">Product Info</div><div class="a" style="left:212px;top:546px;width:89px;height:19px;border:1px solid #3b65a8;border-bottom:none;border-radius:4px 4px 0 0;background:linear-gradient(#7ea4dc 0%,#6a92d0 27%,#4670b6 32%,#5480c2 62%,#8aaee1 100%);box-shadow:inset 0 1px 0 #94b5e4"></div><div class="t" style="left:220px;top:549px;color:#fff;letter-spacing:0.1px">Περισσότερα...</div>
<div class="lb" style="left:142px;top:579px">Θυρίδα #1:</div><div class="in d" style="left:266px;top:576px;width:346px"></div>
<div class="lb" style="left:142px;top:603px">Διαθέσιμο υπόλοιπο:</div><div class="in d r" style="left:266px;top:600px;width:346px">20,00</div><div class="ar g" style="left:602px;top:609px"></div>
<div class="lb" style="left:142px;top:627px">Υπόλοιπο καταστήματος:</div><div class="in d r" style="left:266px;top:624px;width:346px">21,00</div><div class="ar g" style="left:602px;top:633px"></div>
<div class="lb" style="left:142px;top:651px">Υπόλοιπο εταιρείας:</div><div class="in d r" style="left:266px;top:648px;width:346px">21,00</div><div class="ar g" style="left:602px;top:657px"></div>
<div class="lb" style="left:622px;top:579px;letter-spacing:-0.05px">Αναμενόμενα:</div><div class="in d r" style="left:746px;top:576px;width:346px">0,00</div><div class="ar g" style="left:1082px;top:585px"></div>
<div class="lb" style="left:622px;top:603px;letter-spacing:-0.05px">Δεσμευμένα συνεργείου:</div><div class="in d r" style="left:746px;top:600px;width:346px">1,00</div><div class="ar g" style="left:1082px;top:609px"></div>
<div class="lb" style="left:622px;top:627px;letter-spacing:-0.05px">Δεσμευμένα πελάτη:</div><div class="in d r" style="left:746px;top:624px;width:346px">0,00</div><div class="ar g" style="left:1082px;top:633px"></div>
<div class="lb" style="left:622px;top:651px;letter-spacing:-0.05px">Παραγγελίες πελάτη:</div><div class="in d r" style="left:746px;top:648px;width:346px">1,00</div><div class="ar g" style="left:1082px;top:657px"></div>
<div class="a" style="left:110px;top:669px;width:1038px;height:4px;background:#e4eefc"></div><div class="a" style="left:121px;top:669px;width:1013px;height:2px;background:linear-gradient(rgba(120,150,200,.35),rgba(120,150,200,0))"></div>
<div id="sb2"><div class="a" style="left:1116px;top:535px;width:17px;height:133px;background:#5b89c8;border:1px solid #3d66a5"></div><div class="a" style="left:1120px;top:540px;width:0;height:0;border-left:4.5px solid transparent;border-right:4.5px solid transparent;border-bottom:5px solid #d5e2f4"></div><div class="a" style="left:1120px;top:658px;width:0;height:0;border-left:4.5px solid transparent;border-right:4.5px solid transparent;border-top:5px solid #d5e2f4"></div><div class="a" style="left:1116px;top:551px;width:17px;height:1px;background:#3d66a5"></div><div class="a" style="left:1117px;top:552px;width:15px;height:81px;border:1px solid #eef3fa;border-bottom:1px solid #3d66a5;background:linear-gradient(90deg,#e3e9f3 0%,#d0dae9 45%,#b4c4dc 50%,#c9d6e9 100%)"></div><div class="a" style="left:1120px;top:589px;width:9px;height:1px;background:#3d66a5"></div><div class="a" style="left:1120px;top:591px;width:9px;height:1px;background:#3d66a5"></div><div class="a" style="left:1120px;top:593px;width:9px;height:1px;background:#3d66a5"></div><div class="a" style="left:1120px;top:595px;width:9px;height:1px;background:#3d66a5"></div></div>
</div>
<!-- status bar -->
<div class="a" style="left:98px;top:673px;width:1081px;height:28px;border-top:1px solid #b5cdee;background:linear-gradient(#d9e7f9 0px,#d6e5f8 7px,#bfd6f3 7px,#c6daf5 12px,#dce9fa 27px)"></div>
<div class="t" style="left:107px;top:679px;font-size:11px;color:#2d4f8c">User: gv</div>
<div class="a" style="left:153px;top:675px;width:1px;height:23px;background:#a9c4e8"></div>
<div id="grip"><div class="a" style="left:1173px;top:687px;width:2px;height:2px;background:#4a7cc0;box-shadow:1px 1px 0 #f4f8fe"></div><div class="a" style="left:1169px;top:691px;width:2px;height:2px;background:#4a7cc0;box-shadow:1px 1px 0 #f4f8fe"></div><div class="a" style="left:1173px;top:691px;width:2px;height:2px;background:#4a7cc0;box-shadow:1px 1px 0 #f4f8fe"></div><div class="a" style="left:1165px;top:695px;width:2px;height:2px;background:#4a7cc0;box-shadow:1px 1px 0 #f4f8fe"></div><div class="a" style="left:1169px;top:695px;width:2px;height:2px;background:#4a7cc0;box-shadow:1px 1px 0 #f4f8fe"></div><div class="a" style="left:1173px;top:695px;width:2px;height:2px;background:#4a7cc0;box-shadow:1px 1px 0 #f4f8fe"></div><div class="a" style="left:103px;top:55px;width:2px;height:2px;background:#3d64a0;box-shadow:1px 1px 0 #9dbbe3"></div><div class="a" style="left:103px;top:59px;width:2px;height:2px;background:#3d64a0;box-shadow:1px 1px 0 #9dbbe3"></div><div class="a" style="left:103px;top:63px;width:2px;height:2px;background:#3d64a0;box-shadow:1px 1px 0 #9dbbe3"></div><div class="a" style="left:103px;top:67px;width:2px;height:2px;background:#3d64a0;box-shadow:1px 1px 0 #9dbbe3"></div></div>

</body></html>
